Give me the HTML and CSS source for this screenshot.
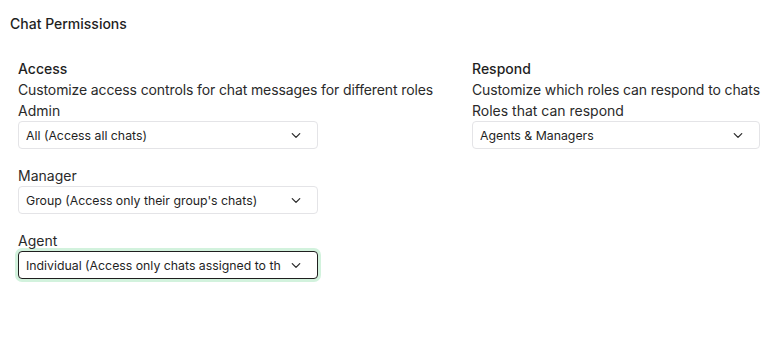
FILE: index.html
```html
<!DOCTYPE html>
<html lang="en">
<head>
    <meta charset="UTF-8">
    <meta name="viewport" content="width=device-width, initial-scale=1.0">
    <title>Chat Permissions</title>
    <link rel="stylesheet" href="styles.css">
</head>
<body>
    <div class="page">
        <h2 class="page-title">Chat Permissions</h2>

        <div class="sections">
            <div class="section section-access">
                <h3>Access</h3>
                <p class="section-desc">Customize access controls for chat messages for different roles</p>

                <div class="field">
                    <label>Admin</label>
                    <div class="select">
                        <span class="select-value">All (Access all chats)</span>
                        <svg class="chevron" viewBox="0 0 12 8" width="12" height="8"><path d="M1.5 1.75 6 6.25l4.5-4.5" fill="none" stroke="#2b2b2b" stroke-width="1.5" stroke-linecap="round" stroke-linejoin="round"/></svg>
                    </div>
                </div>

                <div class="field">
                    <label>Manager</label>
                    <div class="select">
                        <span class="select-value">Group (Access only their group's chats)</span>
                        <svg class="chevron" viewBox="0 0 12 8" width="12" height="8"><path d="M1.5 1.75 6 6.25l4.5-4.5" fill="none" stroke="#2b2b2b" stroke-width="1.5" stroke-linecap="round" stroke-linejoin="round"/></svg>
                    </div>
                </div>

                <div class="field">
                    <label>Agent</label>
                    <div class="select focused">
                        <span class="select-value">Individual (Access only chats assigned to them)</span>
                        <svg class="chevron" viewBox="0 0 12 8" width="12" height="8"><path d="M1.5 1.75 6 6.25l4.5-4.5" fill="none" stroke="#2b2b2b" stroke-width="1.5" stroke-linecap="round" stroke-linejoin="round"/></svg>
                    </div>
                </div>
            </div>

            <div class="section section-respond">
                <h3>Respond</h3>
                <p class="section-desc">Customize which roles can respond to chats</p>

                <div class="field">
                    <label>Roles that can respond</label>
                    <div class="select wide">
                        <span class="select-value">Agents &amp; Managers</span>
                        <svg class="chevron" viewBox="0 0 12 8" width="12" height="8"><path d="M1.5 1.75 6 6.25l4.5-4.5" fill="none" stroke="#2b2b2b" stroke-width="1.5" stroke-linecap="round" stroke-linejoin="round"/></svg>
                    </div>
                </div>
            </div>
        </div>
    </div>
</body>
</html>
```

FILE: styles.css
```css
* {
    margin: 0;
    padding: 0;
    box-sizing: border-box;
}

body {
    font-family: Inter, 'Noto Sans', sans-serif;
    background: #ffffff;
    color: #1c1c1c;
}

.page {
    padding: 15px 10px;
}

.page-title {
    font-size: 14px;
    font-weight: 500;
    line-height: 18px;
    color: #1f1f1f;
}

.sections {
    display: flex;
    padding: 25px 4px 0 8px;
}

.section {
    flex-shrink: 0;
}

.section-access {
    width: 454px;
}

.section-respond {
    width: 288px;
}

.section h3 {
    font-size: 14px;
    font-weight: 500;
    line-height: 21px;
    color: #1f1f1f;
}

.section-desc {
    font-size: 14px;
    line-height: 21px;
    letter-spacing: -0.12px;
    color: #2a2a2a;
    white-space: nowrap;
}

.field {
    margin-bottom: 16px;
}

.field label {
    display: block;
    font-size: 14px;
    line-height: 21px;
    color: #2a2a2a;
}

.select {
    display: flex;
    align-items: center;
    width: 300px;
    height: 28px;
    padding: 0 16px 0 7px;
    border: 1px solid #e4e4e7;
    border-radius: 4px;
    background: #fff;
    font-size: 12.3px;
    color: #1f1f1f;
}

.select.wide {
    width: 288px;
}

.select.focused {
    border-color: #1f1f1f;
    box-shadow: 0 0 0 3px #d2f2dd;
}

.select-value {
    flex: 1;
    overflow: hidden;
    white-space: nowrap;
    margin-right: 10px;
}

.chevron {
    flex-shrink: 0;
    width: 10px;
    height: 7px;
}
```
